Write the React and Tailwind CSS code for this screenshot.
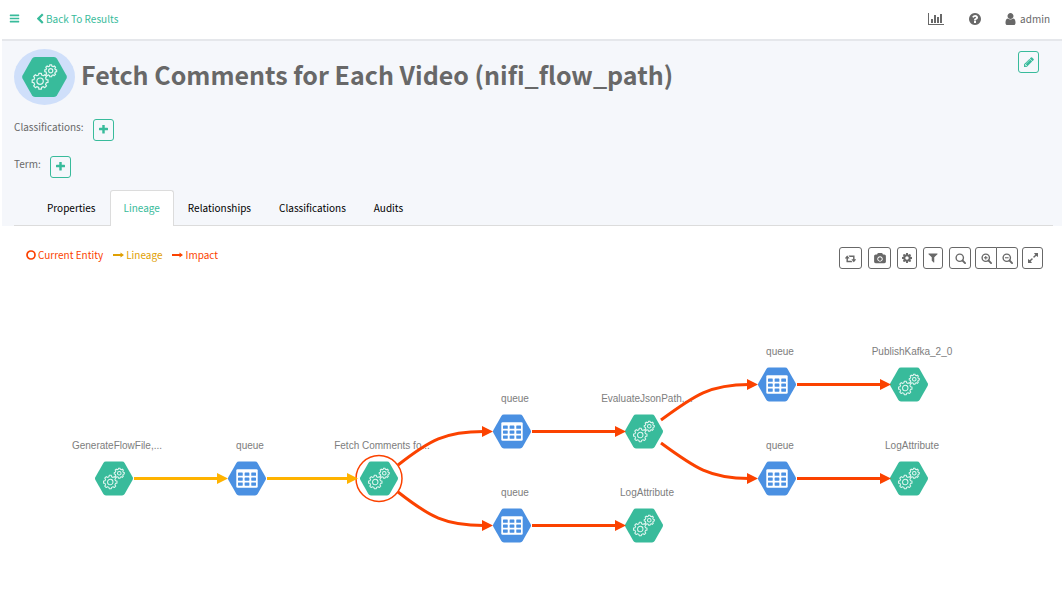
import React from "react";

const ICONS = {
  bars: ["0 0 1792 1792", "M1664 1344v128q0 26-19 45t-45 19h-1408q-26 0-45-19t-19-45v-128q0-26 19-45t45-19h1408q26 0 45 19t19 45zm0-512v128q0 26-19 45t-45 19h-1408q-26 0-45-19t-19-45v-128q0-26 19-45t45-19h1408q26 0 45 19t19 45zm0-512v128q0 26-19 45t-45 19h-1408q-26 0-45-19t-19-45v-128q0-26 19-45t45-19h1408q26 0 45 19t19 45z"],
  chevronLeft: ["256 0 1280 1792", "M1427 301l-531 531 531 531q19 19 19 45t-19 45l-166 166q-19 19-45 19t-45-19l-742-742q-19-19-19-45t19-45l742-742q19-19 45-19t45 19l166 166q19 19 19 45t-19 45z"],
  plus: ["192 192 1408 1408", "M1600 736v192q0 40-28 68t-68 28h-416v416q0 40-28 68t-68 28h-192q-40 0-68-28t-28-68v-416h-416q-40 0-68-28t-28-68v-192q0-40 28-68t68-28h416v-416q0-40 28-68t68-28h192q40 0 68 28t28 68v416h416q40 0 68 28t28 68z"],
  question: ["128 128 1536 1536", "M1024 1376v-192q0-14-9-23t-23-9h-192q-14 0-23 9t-9 23v192q0 14 9 23t23 9h192q14 0 23-9t9-23zm256-672q0-88-55.5-163t-138.5-116-170-41q-243 0-371 213-15 24 8 42l132 100q7 6 19 6 16 0 25-12 53-68 86-92 34-24 86-24 48 0 85.5 26t37.5 59q0 38-20 61t-68 45q-63 28-115.5 86.5t-52.5 125.5v36q0 14 9 23t23 9h192q14 0 23-9t9-23q0-19 21.5-49.5t54.5-49.5q32-18 49-28.5t46-35 44.5-48 28-60.5 12.5-81zm384 192q0 209-103 385.5t-279.5 279.5-385.5 103-385.5-103-279.5-279.5-103-385.5 103-385.5 279.5-279.5 385.5-103 385.5 103 279.5 279.5 103 385.5z"],
  user: ["256 128 1280 1536", "M1536 1399q0 109-62.5 187t-150.5 78h-854q-88 0-150.5-78t-62.5-187q0-85 8.5-160.5t31.5-152 58.5-131 94-89 134.5-34.5q131 128 313 128t313-128q76 0 134.5 34.5t94 89 58.5 131 31.5 152 8.5 160.5zm-256-887q0 159-112.5 271.5t-271.5 112.5-271.5-112.5-112.5-271.5 112.5-271.5 271.5-112.5 271.5 112.5 112.5 271.5z"],
  chart: ["0 128 2048 1536", "M640 896v512h-256v-512h256zm384-512v1024h-256v-1024h256zm1024 1152v128h-2048v-1536h128v1408h1920zm-640-896v768h-256v-768h256zm384-384v1152h-256v-1152h256z"],
  camera: ["0 0 1920 1792", "M960 672q119 0 203.5 84.5t84.5 203.5-84.5 203.5-203.5 84.5-203.5-84.5-84.5-203.5 84.5-203.5 203.5-84.5zm704-416q106 0 181 75t75 181v896q0 106-75 181t-181 75h-1408q-106 0-181-75t-75-181v-896q0-106 75-181t181-75h224l51-136q19-49 69.5-84.5t103.5-35.5h512q53 0 103.5 35.5t69.5 84.5l51 136h224zm-704 1152q185 0 316.5-131.5t131.5-316.5-131.5-316.5-316.5-131.5-316.5 131.5-131.5 316.5 131.5 316.5 316.5 131.5z"],
  cog: ["128 128 1536 1536", "M1152 896q0-106-75-181t-181-75-181 75-75 181 75 181 181 75 181-75 75-181zm512-109v222q0 12-8 23t-20 13l-185 28q-19 54-39 91 35 50 107 138 10 12 10 25t-9 23q-27 37-99 108t-94 71q-12 0-26-9l-138-108q-44 23-91 38-16 136-29 186-7 28-36 28h-222q-14 0-24.5-8.5t-11.5-21.5l-28-184q-49-16-90-37l-141 107q-10 9-25 9-14 0-25-11-126-114-165-168-7-10-7-23 0-12 8-23 15-21 51-66.5t54-70.5q-27-50-41-99l-183-27q-13-2-21-12.5t-8-23.5v-222q0-12 8-23t19-13l186-28q14-46 39-92-40-57-107-138-10-12-10-24 0-10 9-23 26-36 98.5-107.5t94.5-71.5q13 0 26 10l138 107q44-23 91-38 16-136 29-186 7-28 36-28h222q14 0 24.5 8.5t11.5 21.5l28 184q49 16 90 37l142-107q9-9 24-9 13 0 25 10 129 119 165 170 7 8 7 22 0 12-8 23-15 21-51 66.5t-54 70.5q26 50 41 98l183 28q13 2 21 12.5t8 23.5z"],
  filter: ["128 192 1536 1536", "M1595 295q17 41-14 70l-493 493v742q0 42-39 59-13 5-25 5-27 0-45-19l-256-256q-19-19-19-45v-486l-493-493q-31-29-14-70 17-39 59-39h1280q42 0 59 39z"],
  retweet: ["0 128 1920 1536", "M1280 1504q0 13-9.5 22.5t-22.5 9.5h-960q-8 0-13.5-2t-9-7-5.5-8-3-11.5-1-11.5v-600h-192q-26 0-45-19t-19-45q0-24 15-41l320-384q19-22 49-22t49 22l320 384q15 17 15 41 0 26-19 45t-45 19h-192v384h576q16 0 25 11l160 192q7 10 7 21zm640-416q0 24-15 41l-320 384q-20 23-49 23t-49-23l-320-384q-15-17-15-41 0-26 19-45t45-19h192v-384h-576q-16 0-25-12l-160-192q-7-9-7-20 0-13 9.5-22.5t22.5-9.5h960q8 0 13.5 2t9 7 5.5 8 3 11.5 1 11.5v600h192q26 0 45 19t19 45z"],
  expand: ["128 128 1536 1536", "M883 1056q0 13-10 23l-332 332 144 144q19 19 19 45t-19 45-45 19h-448q-26 0-45-19t-19-45v-448q0-26 19-45t45-19 45 19l144 144 332-332q10-10 23-10t23 10l114 114q10 10 10 23zm781-864v448q0 26-19 45t-45 19-45-19l-144-144-332 332q-10 10-23 10t-23-10l-114-114q-10-10-10-23t10-23l332-332-144-144q-19-19-19-45t19-45 45-19h448q26 0 45 19t19 45z"],
  pencil: ["128 128 1536 1536", "M491 1536l91-91-235-235-91 91v107h128v128h107zm523-928q0-22-22-22-10 0-17 7l-542 542q-7 7-7 17 0 22 22 22 10 0 17-7l542-542q7-7 7-17zm-54-192l416 416-832 832h-416v-416zm683 96q0 53-37 90l-166 166-416-416 166-165q36-38 90-38 53 0 91 38l235 234q37 39 37 91z"],
};

function Icon({ name, className }) {
  const [viewBox, d] = ICONS[name];
  return (
    <svg viewBox={viewBox} className={className} fill="currentColor" aria-hidden="true">
      <path d={d} />
    </svg>
  );
}

function Magnifier({ sign }) {
  return (
    <svg viewBox="0 0 12 12" className="size-[11px]" fill="none" stroke="currentColor" strokeWidth="1.5" aria-hidden="true">
      <circle cx="5.2" cy="5.2" r="4" />
      <path d="M8.2 8.2L11 11" strokeWidth="2" strokeLinecap="round" />
      {sign && <path d="M3.2 5.2h4" strokeWidth="1.2" />}
      {sign === "plus" && <path d="M5.2 3.2v4" strokeWidth="1.2" />}
    </svg>
  );
}

function LongArrow() {
  return (
    <svg viewBox="0 0 11 8" className="h-2 w-[11px]" fill="currentColor" aria-hidden="true">
      <path d="M0 3h7.5V1.4L11 4 7.5 6.6V5H0z" />
    </svg>
  );
}

function gearPath(cx, cy, r, teeth) {
  const inner = r * 0.8;
  const step = (Math.PI * 2) / teeth;
  const points = [];
  for (let i = 0; i < teeth; i++) {
    const a = i * step - Math.PI / 2;
    [[-0.3, inner], [-0.2, r], [0.2, r], [0.3, inner]].forEach(([k, rad]) => {
      points.push(`${(cx + rad * Math.cos(a + k * step)).toFixed(2)} ${(cy + rad * Math.sin(a + k * step)).toFixed(2)}`);
    });
  }
  return `M${points.join("L")}Z`;
}

const BIG_GEAR = gearPath(-4.4, 4.2, 8, 8);
const SMALL_GEAR = gearPath(6.2, -6.2, 6, 8);
const HEXAGON = "M-9.5 -20H9.5Q11.5 -20 12.5 -18.3L22 -1.5Q22.8 0 22 1.5L12.5 18.3Q11.5 20 9.5 20H-9.5Q-11.5 20 -12.5 18.3L-22 1.5Q-22.8 0 -22 -1.5L-12.5 -18.3Q-11.5 -20 -9.5 -20Z";

function ProcessGlyph() {
  return (
    <g>
      <path d={HEXAGON} fill="#38bb9b" />
      <g fill="none" stroke="#e3f6f1" strokeWidth="1.2" strokeLinejoin="round">
        <path d={BIG_GEAR} />
        <circle cx="-4.4" cy="4.2" r="3.2" />
        <path d={SMALL_GEAR} />
        <circle cx="6.2" cy="-6.2" r="2.1" />
      </g>
    </g>
  );
}

function DatasetGlyph() {
  return (
    <g>
      <path d={HEXAGON} fill="#4a90e2" />
      <rect x="-12.6" y="-11" width="25.2" height="22" rx="1.6" fill="#fff" />
      {[-7, -1.2, 4.6].map((y) =>
        [-10.6, -2.8, 5].map((x) => <rect key={`${x}/${y}`} x={x} y={y} width="5.6" height="3.9" rx="0.5" fill="#4a90e2" />)
      )}
    </g>
  );
}

const NODES = [
  { x: 114, y: 478, label: "GenerateFlowFile,...", kind: "process" },
  { x: 247, y: 478, label: "queue", kind: "dataset" },
  { x: 379, y: 478, label: "Fetch Comments fo...", kind: "process", current: true },
  { x: 512, y: 431, label: "queue", kind: "dataset" },
  { x: 512, y: 525, label: "queue", kind: "dataset" },
  { x: 644, y: 431, label: "EvaluateJsonPath,...", kind: "process" },
  { x: 644, y: 525, label: "LogAttribute", kind: "process" },
  { x: 777, y: 384, label: "queue", kind: "dataset" },
  { x: 777, y: 478, label: "queue", kind: "dataset" },
  { x: 909, y: 384, label: "PublishKafka_2_0", kind: "process" },
  { x: 909, y: 478, label: "LogAttribute", kind: "process" },
];

const LINEAGE = "#ffb300";
const IMPACT = "#fb4200";

const EDGES = [
  { d: "M134 478.5H220", tip: [228, 478.5], color: LINEAGE },
  { d: "M267 478.5H350", tip: [358, 478.5], color: LINEAGE },
  { d: "M398 465C430 440 445 431.5 484 431.5", tip: [493, 431.5], color: IMPACT },
  { d: "M398 492C430 517 445 525.5 484 525.5", tip: [493, 525.5], color: IMPACT },
  { d: "M532 431.5H617", tip: [626, 431.5], color: IMPACT },
  { d: "M532 525.5H617", tip: [626, 525.5], color: IMPACT },
  { d: "M661 420C695 395 710 384.5 749 384.5", tip: [758, 384.5], color: IMPACT },
  { d: "M661 443C695 468 710 478.5 749 478.5", tip: [758, 478.5], color: IMPACT },
  { d: "M797 384.5H882", tip: [891, 384.5], color: IMPACT },
  { d: "M797 478.5H882", tip: [891, 478.5], color: IMPACT },
];

function LineageGraph() {
  return (
    <svg viewBox="2 275 1060 325" className="block h-[325px] w-[1060px]" role="img" aria-label="Lineage graph">
      {NODES.map((n) => (
        <g key={`${n.x}-${n.y}`}>
          {n.current && <circle cx={n.x} cy={n.y + 0.5} r="23" fill="#fff" stroke={IMPACT} strokeWidth="1.5" />}
          <g transform={`translate(${n.x} ${n.y + 0.5}) scale(0.85)`}>
            {n.kind === "process" ? <ProcessGlyph /> : <DatasetGlyph />}
          </g>
          <text x={n.x + 3} y={n.y - 29} textAnchor="middle" className="fill-[#7d7d7d] font-['Liberation_Sans',sans-serif] text-[10px]">
            {n.label}
          </text>
        </g>
      ))}
      {EDGES.map(({ d, tip: [x, y], color }) => (
        <g key={d}>
          <path d={d} fill="none" stroke={color} strokeWidth="3" />
          <path d={`M${x} ${y}l-11 -5.5v11z`} fill={color} />
        </g>
      ))}
    </svg>
  );
}

const OUTLINE = "flex h-[22px] w-[21px] items-center justify-center rounded-[3px] border border-[#38bb9b] text-[#38bb9b]";
const TOOL = "flex h-[22px] items-center justify-center border border-[#686868] bg-white";

function AddRow({ label }) {
  return (
    <div className="flex items-start gap-[9px]">
      <span className="leading-4">{label}</span>
      <button type="button" aria-label={`Add ${label.replace(":", "")}`} className={`${OUTLINE} pb-0.5`}>
        <Icon name="plus" className="size-[9px]" />
      </button>
    </div>
  );
}

const TABS = ["Properties", "Lineage", "Relationships", "Classifications", "Audits"];

export default function App() {
  return (
    <div className="min-h-screen bg-white pl-[2px] font-['Noto_Sans_CJK_SC',sans-serif] text-[10px] leading-4 text-[#686868]">
      <header className="flex h-[41px] items-center justify-between border-b-2 border-[#e5e7eb] pr-3 pb-0.5 pl-[7px]">
        <div className="flex items-center gap-4">
          <button type="button" aria-label="Toggle menu" className="text-[#38bb9b]">
            <Icon name="bars" className="size-[11px]" />
          </button>
          <a href="#results" className="flex items-center gap-0.5 text-[#38bb9b]">
            <Icon name="chevronLeft" className="h-3 w-2" />
            Back To Results
          </a>
        </div>
        <div className="flex items-center">
          <a href="#statistics" aria-label="Statistics" className="mr-[25px]">
            <Icon name="chart" className="h-3 w-4" />
          </a>
          <a href="#help" aria-label="Help" className="mr-6">
            <Icon name="question" className="size-3" />
          </a>
          <a href="#user" className="flex items-center gap-1">
            <Icon name="user" className="h-3 w-[11px]" />
            admin
          </a>
        </div>
      </header>

      <section className="bg-[#f5f7fb] pt-2">
        <div className="flex items-start justify-between pr-[23px] pl-3">
          <div className="flex items-start gap-[6px]">
            <svg viewBox="-30.5 -28 61 56" className="h-14 w-[61px] shrink-0" aria-hidden="true">
              <ellipse rx="30.5" ry="28" fill="#cfdffa" />
              <ProcessGlyph />
            </svg>
            <h1 className="text-[25px] leading-[50px] font-bold">Fetch Comments for Each Video (nifi_flow_path)</h1>
          </div>
          <button type="button" aria-label="Edit" className={`${OUTLINE} mt-0.5 shrink-0`}>
            <Icon name="pencil" className="size-[10px]" />
          </button>
        </div>
        <div className="mt-[14px] flex flex-col gap-[15px] pl-3">
          <AddRow label="Classifications:" />
          <AddRow label="Term:" />
        </div>
        <div className="pr-[9px] pl-3">
          <div role="tablist" className="mt-3 flex border-b border-[#dcdcdc] pl-[19px]">
            {TABS.map((tab) => (
              <button
                key={tab}
                type="button"
                role="tab"
                aria-selected={tab === "Lineage"}
                className={
                  tab === "Lineage"
                    ? "-mb-px h-9 rounded-t-[3px] border border-b-0 border-[#dcdcdc] bg-white px-[13px] pb-0.5 text-[#38bb9b]"
                    : "h-[35px] px-[14px] text-black"
                }
              >
                {tab}
              </button>
            ))}
          </div>
        </div>
      </section>

      <main>
        <div className="flex items-start justify-between pt-[21px] pr-[19px] pl-6">
          <div className="flex items-center gap-[10px] leading-4">
            <span className="flex items-center gap-0.5 text-[#fb4200]">
              <svg viewBox="0 0 10 10" className="size-[10px]" fill="none" stroke="currentColor" strokeWidth="1.7" aria-hidden="true">
                <circle cx="5" cy="5" r="4" />
              </svg>
              Current Entity
            </span>
            <span className="flex items-center gap-0.5 text-[#dfa003]">
              <LongArrow />
              Lineage
            </span>
            <span className="flex items-center gap-0.5 text-[#fb4200]">
              <LongArrow />
              Impact
            </span>
          </div>
          <div className="flex gap-1">
            <div className="flex gap-1.5">
              <button type="button" aria-label="Realign lineage" className={`${TOOL} w-[23px] rounded-[3px]`}>
                <Icon name="retweet" className="h-[9px] w-[11px]" />
              </button>
              <button type="button" aria-label="Export to PNG" className={`${TOOL} w-[23px] rounded-[3px]`}>
                <Icon name="camera" className="h-[11px] w-3" />
              </button>
              <button type="button" aria-label="Settings" className={`${TOOL} w-[20px] rounded-[3px]`}>
                <Icon name="cog" className="size-[10px]" />
              </button>
              <button type="button" aria-label="Filter" className={`${TOOL} w-[20px] rounded-[3px]`}>
                <Icon name="filter" className="size-[10px]" />
              </button>
              <button type="button" aria-label="Search" className={`${TOOL} w-[22px] rounded-[3px]`}>
                <Magnifier />
              </button>
            </div>
            <div className="flex">
              <button type="button" aria-label="Zoom in" className={`${TOOL} w-[22px] rounded-l-[3px]`}>
                <Magnifier sign="plus" />
              </button>
              <button type="button" aria-label="Zoom out" className={`${TOOL} -ml-px w-[22px] rounded-r-[3px]`}>
                <Magnifier sign="minus" />
              </button>
            </div>
            <button type="button" aria-label="Full screen" className={`${TOOL} w-[21px] rounded-[3px]`}>
              <Icon name="expand" className="size-[10px]" />
            </button>
          </div>
        </div>
        <div className="mt-1.5 overflow-hidden">
          <LineageGraph />
        </div>
      </main>
    </div>
  );
}
